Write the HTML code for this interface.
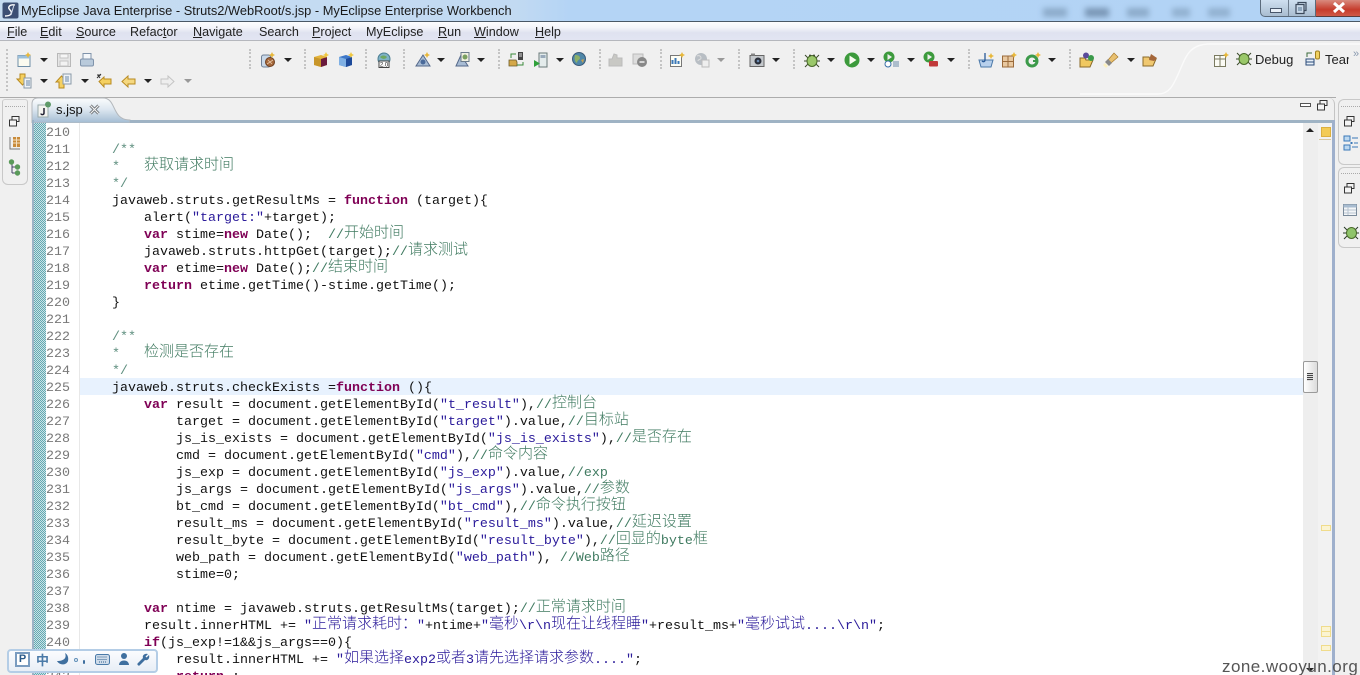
<!DOCTYPE html>
<html><head><meta charset="utf-8"><title>MyEclipse</title>
<style>
html,body{margin:0;padding:0;width:1360px;height:675px;overflow:hidden;background:#f0f0f0}
body{position:relative;font-family:"Liberation Sans","Noto Sans CJK SC",sans-serif}
.abs,svg.i,.m,.a,.s,.l,.n,.v{position:absolute}
svg.i{width:16px;height:16px;overflow:visible}
.m{top:24px;font-size:12.6px;line-height:16px;color:#222;white-space:pre}
.a{width:0;height:0;border-left:4px solid transparent;border-right:4px solid transparent;border-top:4px solid #222}
.a.g{border-top-color:#999}
.s{width:0;border-left:2px dotted #c4c4c4;height:20px;top:49px}
.n{left:46px;width:26px;height:17px;margin-top:1px;font:13.33px/17px "Liberation Mono",monospace;color:#787878}
.l{left:80px;height:17px;margin-top:1px;font:13.33px/17px "Liberation Mono","Noto Sans CJK SC",monospace;color:#111;white-space:pre}
.l b{color:#7f0055;font-weight:bold}
.l i{font-style:normal;color:#2a1a9a}
.l u{text-decoration:none;color:#3f7a60}
.l em{font:300 15px/0 "Noto Sans CJK SC",sans-serif;position:relative;top:-1px;font-style:normal}
.j{color:#5f8f7f}
.v{width:22px;border:1px solid #c8c8c8;border-right:0;border-radius:6px 0 0 6px;background:#f0f0f0}
.mk{position:absolute;left:1321px;width:8px;height:4px;border:1px solid #f0dc8c;background:#fbf4d2}
</style></head><body>

<!-- title bar -->
<div class="abs" style="left:0;top:0;width:1360px;height:21px;background:linear-gradient(90deg,#c6dcf1 0,#c2daf2 515px,#b4d4f5 570px,#b2d3f5 100%)"></div>
<div class="abs" style="left:0;top:21px;width:1360px;height:1px;background:#4a5866"></div>
<svg class="i" style="left:2px;top:2px;width:17px;height:17px" viewBox="0 0 17 17"><rect width="16" height="16" x=".5" y=".5" rx="2" fill="#3c4f74"/><path d="M13 3C8 2 5 5 8 8s1 6-5 6" stroke="#fff" stroke-width="1.4" fill="none"/><path d="M12 3L9 13" stroke="#cfd8e8" stroke-width="1"/></svg>
<div class="abs" style="left:21px;top:3px;font-size:12.85px;line-height:16px;color:#1a1a1a;white-space:pre">MyEclipse Java Enterprise - Struts2/WebRoot/s.jsp - MyEclipse Enterprise Workbench</div>
<div class="abs" style="left:1043px;top:8px;width:24px;height:9px;background:#7c9ab8;filter:blur(3px);opacity:.7"></div>
<div class="abs" style="left:1085px;top:8px;width:24px;height:9px;background:#6c88a6;filter:blur(3px);opacity:.8"></div>
<div class="abs" style="left:1127px;top:8px;width:22px;height:9px;background:#7c9ab8;filter:blur(3px);opacity:.7"></div>
<div class="abs" style="left:1172px;top:8px;width:18px;height:9px;background:#7c9ab8;filter:blur(3px);opacity:.6"></div>
<div class="abs" style="left:1208px;top:8px;width:22px;height:9px;background:#7c9ab8;filter:blur(3px);opacity:.6"></div>
<div class="abs" style="left:1260px;top:0;width:56px;height:17px;background:linear-gradient(#cfe0f0,#a9bdd0);border:1px solid #5b6b7b;border-top:0;border-radius:0 0 0 5px;box-sizing:border-box"></div>
<div class="abs" style="left:1288px;top:0;width:1px;height:16px;background:#6f7f8f"></div>
<div class="abs" style="left:1316px;top:0;width:44px;height:17px;background:linear-gradient(#d98a7e,#c63c2c 60%,#d05a48);border-bottom:1px solid #5b3b3b;box-sizing:border-box"></div>
<div class="abs" style="left:1270px;top:8px;width:10px;height:3px;border:1px solid #47566a;background:#e8f0f8"></div>
<svg class="i" style="left:1294px;top:1px;width:14px;height:14px" viewBox="0 0 14 14"><rect x="4" y="1.5" width="8" height="8" fill="none" stroke="#3c4a5c" stroke-width="1.2"/><rect x="2" y="3.5" width="8" height="9" fill="#c8d8e8" stroke="#3c4a5c" stroke-width="1.2"/><rect x="4" y="6" width="4" height="4" fill="#8ea6bc"/></svg>
<svg class="i" style="left:1332px;top:2px;width:14px;height:12px" viewBox="0 0 14 12"><path d="M2 1l10 9M12 1L2 10" stroke="#fff" stroke-width="3"/></svg>

<!-- menu -->
<div class="abs" style="left:0;top:22px;width:1360px;height:18px;background:linear-gradient(#fdfdfe 0,#f4f5fa 30%,#dfe2f0 60%,#e2e5f2 100%)"></div>
<div class="abs" style="left:0;top:40px;width:1360px;height:1px;background:#b5b7bd"></div>
<div class="m" style="left:7px"><span style="text-decoration:underline">F</span>ile</div>
<div class="m" style="left:40px"><span style="text-decoration:underline">E</span>dit</div>
<div class="m" style="left:76px"><span style="text-decoration:underline">S</span>ource</div>
<div class="m" style="left:130px">Refac<span style="text-decoration:underline">t</span>or</div>
<div class="m" style="left:193px"><span style="text-decoration:underline">N</span>avigate</div>
<div class="m" style="left:259px">Search</div>
<div class="m" style="left:312px"><span style="text-decoration:underline">P</span>roject</div>
<div class="m" style="left:366px">MyEclipse</div>
<div class="m" style="left:438px"><span style="text-decoration:underline">R</span>un</div>
<div class="m" style="left:474px"><span style="text-decoration:underline">W</span>indow</div>
<div class="m" style="left:535px"><span style="text-decoration:underline">H</span>elp</div>

<!-- toolbar separators -->
<div class="s" style="left:6px;height:42px"></div>
<div class="s" style="left:249px"></div><div class="s" style="left:304px"></div><div class="s" style="left:365px"></div><div class="s" style="left:403px"></div><div class="s" style="left:498px"></div><div class="s" style="left:599px"></div><div class="s" style="left:660px"></div><div class="s" style="left:738px"></div><div class="s" style="left:793px"></div><div class="s" style="left:968px"></div><div class="s" style="left:1069px"></div>

<!-- perspective curve -->
<svg class="abs" style="left:1040px;top:40px;width:320px;height:58px" viewBox="0 0 320 58"><path d="M320 4H170C150 4 146 16 140 30S130 54 118 54H40" fill="none" stroke="#fafafa" stroke-width="1.4"/></svg>

<!-- toolbar row 1 icons -->
<svg class="i" style="left:16px;top:52px" viewBox="0 0 16 16"><rect x="2" y="3.5" width="12" height="11" fill="#fbfbf0" stroke="#6f8fa8"/><rect x="2" y="3.5" width="12" height="3" fill="#9cc0dc"/><path d="M12 0l1 2 2 1-2 1-1 2-1-2-2-1 2-1z" fill="#e8b83a"/></svg>
<div class="a" style="left:40px;top:58px"></div>
<svg class="i" style="left:56px;top:52px" viewBox="0 0 16 16"><rect x="1.5" y="1.5" width="13" height="13" fill="#e6e6e6" stroke="#b8b8b8"/><rect x="4" y="2" width="8" height="4" fill="#f6f6f6" stroke="#c4c4c4"/><rect x="4" y="9" width="8" height="5" fill="#f2f2f2" stroke="#c4c4c4"/></svg>
<svg class="i" style="left:79px;top:52px" viewBox="0 0 16 16"><rect x="4" y="1.5" width="8" height="6" fill="#f4f7fa" stroke="#7f93ab"/><rect x="1.5" y="7" width="13" height="7" rx="1.5" fill="#b9cadb" stroke="#7f93ab"/></svg>
<svg class="i" style="left:260px;top:52px" viewBox="0 0 16 16"><rect x="1.5" y="3" width="9" height="12" rx="2" fill="#c9d8e8" stroke="#6f8096"/><circle cx="10" cy="10" r="4.5" fill="#a5673a" stroke="#6d3f20"/><path d="M7 12l6-4M8 8l4 4" stroke="#e8c8a8" stroke-width=".8"/><path d="M12 0l1 2 2 1-2 1-1 2-1-2-2-1 2-1z" fill="#e8b83a"/></svg>
<div class="a" style="left:284px;top:58px"></div>
<svg class="i" style="left:313px;top:52px" viewBox="0 0 16 16"><path d="M1 5l7-2 6 2v8l-6 2-7-2z" fill="#e5b43a"/><path d="M8 7l6-2v8l-6 2z" fill="#6a1a3c"/><path d="M1 5l7 2v8l-7-2z" fill="#c8962a"/><path d="M13 0l1 2 2 1-2 1-1 2-1-2-2-1 2-1z" fill="#f0c840"/></svg>
<svg class="i" style="left:338px;top:52px" viewBox="0 0 16 16"><path d="M1 5l7-2 6 2v8l-6 2-7-2z" fill="#3f78c8"/><path d="M8 7l6-2v8l-6 2z" fill="#1d4a9a"/><path d="M1 5l7 2v8l-7-2z" fill="#7fb0e4"/><path d="M13 0l1 2 2 1-2 1-1 2-1-2-2-1 2-1z" fill="#f0c840"/></svg>
<svg class="i" style="left:376px;top:52px" viewBox="0 0 16 16"><circle cx="8" cy="7" r="6" fill="#7fb2c6" stroke="#4a7e92"/><path d="M4 5c2-2 5-2 7 0-2 3-5 2-7 0z" fill="#6ea860"/><rect x="3" y="9" width="10" height="6.5" fill="#fff" stroke="#444"/><text x="8" y="14.4" font-size="6" text-anchor="middle" fill="#222" font-family="Liberation Sans">2.0</text></svg>
<svg class="i" style="left:415px;top:52px" viewBox="0 0 16 16"><path d="M8 3L1 14h14z" fill="#a8bcd4" stroke="#54688a"/><circle cx="8" cy="10" r="2.5" fill="#4a6a9a"/><path d="M12 0l1 2 2 1-2 1-1 2-1-2-2-1 2-1z" fill="#e8b83a"/></svg>
<div class="a" style="left:437px;top:58px"></div>
<svg class="i" style="left:455px;top:51px" viewBox="0 0 16 16"><path d="M6 4L1 15h12z" fill="#a8bcd4" stroke="#54688a"/><rect x="6" y="1.5" width="8" height="9" fill="#f0f0e0" stroke="#6a7a8a"/><circle cx="10" cy="6" r="2.5" fill="#7aa060"/></svg>
<div class="a" style="left:556px;top:58px"></div>
<div class="a" style="left:477px;top:58px"></div>
<svg class="i" style="left:508px;top:51px" viewBox="0 0 16 16"><path d="M1 9h7l1 2v4H1z" fill="#d4a848" stroke="#6a5a2a" stroke-width=".8"/><rect x="10" y="1" width="5" height="8" fill="#444"/><path d="M11 3h3M11 5h3" stroke="#ddd"/><path d="M3 7V3h5M15 11v3H9" stroke="#3a8a3a" stroke-width="1" fill="none"/></svg>
<svg class="i" style="left:533px;top:52px" viewBox="0 0 16 16"><rect x="6" y="1" width="8" height="14" fill="#e4ecec" stroke="#6a7a7a"/><rect x="7.5" y="3" width="5" height="3" fill="#9ab"/><path d="M1 8l6 3.5-6 3.5z" fill="#2fa03a"/></svg>
<svg class="i" style="left:571px;top:51px" viewBox="0 0 16 16"><circle cx="8" cy="8" r="6.5" fill="#4f87a8" stroke="#3a5a78"/><path d="M4 4c3 0 5 1 5 3s-3 2-3 5c-2-1-3-4-2-8z" fill="#8cb068"/><path d="M10 9l3-1-1 4z" fill="#c8a050"/></svg>
<svg class="i" style="left:608px;top:52px" viewBox="0 0 16 16"><path d="M1 7h3l2-5 3 1v3h5v8H1z" fill="#c8c8c4" stroke="#bbb"/></svg>
<svg class="i" style="left:632px;top:52px" viewBox="0 0 16 16"><path d="M1 2h10v10H1z" fill="#ddd" stroke="#bbb"/><circle cx="10" cy="10" r="5" fill="#888"/><path d="M7.5 10h5" stroke="#eee" stroke-width="1.5"/></svg>
<svg class="i" style="left:669px;top:52px" viewBox="0 0 16 16"><rect x="1.5" y="3.5" width="11" height="11" fill="#fdfdf4" stroke="#777"/><path d="M3.5 12V8M6.5 12V6M9.5 12V9" stroke-width="2" stroke="#3a78b8"/><path d="M13 0l1 2 2 1-2 1-1 2-1-2-2-1 2-1z" fill="#e8b83a"/></svg>
<svg class="i" style="left:694px;top:52px" viewBox="0 0 16 16"><circle cx="7" cy="7" r="6" fill="#b8bec4"/><rect x="8" y="8" width="7" height="7" fill="#eee" stroke="#bbb"/><path d="M3 4c2-1 4 0 4 2s-3 1-3 3" stroke="#ddd" fill="none"/></svg>
<div class="a g" style="left:717px;top:58px"></div>
<svg class="i" style="left:749px;top:52px" viewBox="0 0 16 16"><rect x="1" y="3.5" width="14" height="11" fill="#c4c8cc" stroke="#666"/><circle cx="9" cy="9" r="3.5" fill="#2a2f3a"/><circle cx="9" cy="9" r="1.3" fill="#6a8ab0"/><rect x="2" y="1.5" width="4" height="2" fill="#888"/></svg>
<div class="a" style="left:772px;top:58px"></div>
<svg class="i" style="left:804px;top:52px" viewBox="0 0 16 16"><path d="M1 3l3 3M15 3l-3 3M0 9h3M13 9h3M1 15l3-3M15 15l-3-3" stroke="#3a4a2a"/><ellipse cx="8" cy="9" rx="5" ry="5.5" fill="#9ac86a" stroke="#4a6a2a"/><circle cx="6" cy="3.5" r="1" fill="#3a4a2a"/><circle cx="10" cy="3.5" r="1" fill="#3a4a2a"/></svg>
<div class="a" style="left:827px;top:58px"></div>
<svg class="i" style="left:844px;top:52px" viewBox="0 0 16 16"><circle cx="8" cy="8" r="7.5" fill="#3c9a3c"/><path d="M5.5 3.5l7 4.5-7 4.5z" fill="#f8fcf0"/></svg>
<div class="a" style="left:867px;top:58px"></div>
<svg class="i" style="left:883px;top:51px" viewBox="0 0 16 16"><circle cx="6" cy="6" r="5.5" fill="#3c9a3c"/><path d="M4.5 3l4.5 3-4.5 3z" fill="#eee"/><circle cx="5" cy="13" r="3" fill="#fff" stroke="#3a70a8"/><path d="M10 11h6M10 13h6M10 15h6" stroke="#6a8aa8"/></svg>
<div class="a" style="left:907px;top:58px"></div>
<svg class="i" style="left:923px;top:51px" viewBox="0 0 16 16"><circle cx="6" cy="6" r="5.5" fill="#3c9a3c"/><path d="M4.5 3l4.5 3-4.5 3z" fill="#eee"/><rect x="6" y="10" width="9" height="5.5" rx="1" fill="#c03a3a"/></svg>
<div class="a" style="left:947px;top:58px"></div>
<svg class="i" style="left:978px;top:52px" viewBox="0 0 16 16"><path d="M1 8l2 7h10l2-7z" fill="#b8d0ec" stroke="#4a78a8"/><path d="M7 1v7c0 2-2 2-3 1" stroke="#2a5a98" stroke-width="1.3" fill="none"/><path d="M13 1l1 2 2 1-2 1-1 2-1-2-2-1 2-1z" fill="#e8b83a"/></svg>
<svg class="i" style="left:1001px;top:52px" viewBox="0 0 16 16"><rect x="1.5" y="4" width="11" height="11" fill="#e8c8a0" stroke="#9a6a3a"/><path d="M7 4v11M1.500 9.500h11" stroke="#9a6a3a"/><path d="M13 0l1 2 2 1-2 1-1 2-1-2-2-1 2-1z" fill="#e8b83a"/></svg>
<svg class="i" style="left:1025px;top:52px" viewBox="0 0 16 16"><circle cx="7" cy="9" r="5" fill="none" stroke="#3c9a4a" stroke-width="3"/><path d="M8 9h4" stroke="#3c9a4a" stroke-width="2"/><path d="M13 0l1 2 2 1-2 1-1 2-1-2-2-1 2-1z" fill="#e8b83a"/></svg>
<div class="a" style="left:1048px;top:58px"></div>
<svg class="i" style="left:1079px;top:52px" viewBox="0 0 16 16"><path d="M1 6h5l1 2h7l-3 7H1z" fill="#f0c860" stroke="#8a6a2a"/><circle cx="7" cy="3.500" r="3" fill="#5a4a9a"/><circle cx="12" cy="6" r="3" fill="#3a9a4a"/></svg>
<svg class="i" style="left:1103px;top:52px" viewBox="0 0 16 16"><path d="M5 8l6-7 4 4-7 6z" fill="#e8c070" stroke="#a87a2a" stroke-width=".7"/><path d="M2 10l3-3 4 4-3 3z" fill="#888"/><path d="M0 13l2-2 3 3-2 2z" fill="#fbf0c0"/></svg>
<div class="a" style="left:1127px;top:58px"></div>
<svg class="i" style="left:1142px;top:52px" viewBox="0 0 16 16"><path d="M1 5h6l1 2h6l-3 7H1z" fill="#f0c870" stroke="#8a6a2a"/><path d="M7 8l2-6 6 4-3 3z" fill="#a5673a"/></svg>

<!-- perspective -->
<svg class="i" style="left:1213px;top:52px" viewBox="0 0 16 16"><rect x="1.500" y="3.500" width="11" height="11" fill="#fbfbf4" stroke="#7a7a60"/><path d="M1.500 7h11M7 3.500v11" stroke="#7a7a60"/><path d="M13 0l1 2 2 1-2 1-1 2-1-2-2-1 2-1z" fill="#e8b83a"/></svg>
<svg class="i" style="left:1236px;top:50px" viewBox="0 0 16 16"><path d="M1 3l3 3M15 3l-3 3M0 9h3M13 9h3M1 15l3-3M15 15l-3-3" stroke="#3a4a2a"/><ellipse cx="8" cy="9" rx="5" ry="5.500" fill="#9ac86a" stroke="#4a6a2a"/></svg>
<div class="abs" style="left:1255px;top:51px;font-size:13px;line-height:17px;color:#222">Debug</div>
<svg class="i" style="left:1305px;top:50px" viewBox="0 0 16 16"><rect x="1" y="9" width="8" height="6" fill="#e8f0f8" stroke="#2a4a78"/><path d="M1 12h8" stroke="#2a4a78"/><path d="M2 7V3h5" stroke="#3a6a3a" fill="none"/><rect x="10.500" y="1" width="4" height="8" rx="1.500" fill="#f0d060" stroke="#a08020"/></svg>
<div class="abs" style="left:1325px;top:51px;width:24px;overflow:hidden;font-size:13px;line-height:17px;color:#222">Team</div>
<div class="abs" style="left:1353px;top:48px;font-size:11px;line-height:12px;color:#8a9ab0">»</div>

<!-- toolbar row 2 -->
<svg class="i" style="left:16px;top:73px" viewBox="0 0 16 16"><path d="M4 1h5v5h3l-5.500 6L1 6h3z" fill="#f5d060" stroke="#b88a20"/><rect x="8" y="5" width="7" height="10" fill="#eef2f6" stroke="#8a9aa8"/><path d="M10 8h4M10 10h4M10 12h4" stroke="#6a88a8"/></svg>
<div class="a" style="left:40px;top:79px"></div>
<svg class="i" style="left:56px;top:73px" viewBox="0 0 16 16"><path d="M3 15h5V9h3L5.500 3 0 9h3z" fill="#f5d060" stroke="#b88a20"/><rect x="7" y="1" width="8" height="10" fill="#eef2f6" stroke="#8a9aa8"/><path d="M9 4h4M9 6h4M9 8h4" stroke="#6a88a8"/></svg>
<div class="a" style="left:81px;top:79px"></div>
<svg class="i" style="left:96px;top:73px" viewBox="0 0 16 16"><path d="M15 6v5H8v3L3 8.500 8 4v2z" fill="#f5d060" stroke="#b88a20"/><path d="M2 2l2 3M5 1L1 5M1 2h4" stroke="#333"/></svg>
<svg class="i" style="left:120px;top:73px" viewBox="0 0 16 16"><path d="M15 6v5H8v3L2 8.500 8 3v3z" fill="#f5d880" stroke="#b88a20"/></svg>
<div class="a" style="left:144px;top:79px"></div>
<svg class="i" style="left:160px;top:73px" viewBox="0 0 16 16"><path d="M1 6v5h7v3l6-5.500L8 3v3z" fill="#eee" stroke="#c4c4c4"/></svg>
<div class="a g" style="left:184px;top:79px"></div>

<!-- frame line -->
<div class="abs" style="left:0;top:97px;width:1336px;height:1px;background:#acacac"></div>

<!-- left trim -->
<div class="abs" style="left:2px;top:99px;width:26px;height:86px;border:1px solid #c8c8c8;border-top-color:#d0d0d0;border-radius:3px 3px 6px 6px;background:#f0f0f0;box-sizing:border-box"></div>
<div class="abs" style="left:5px;top:106px;width:20px;height:0;border-top:1px dotted #aaa"></div>
<svg class="i" style="left:8px;top:115px;width:13px;height:13px" viewBox="0 0 13 13"><rect x="4" y="1.500" width="7" height="5" fill="#f4f4f4" stroke="#333"/><rect x="1.500" y="5" width="7" height="6" fill="#f4f4f4" stroke="#333"/></svg>
<svg class="i" style="left:8px;top:136px;width:14px;height:14px" viewBox="0 0 14 14"><path d="M2 1v12h10" stroke="#777" fill="none"/><rect x="5" y="1" width="7" height="10" fill="#c88a3a"/><path d="M5 4h7M5 7h7M8.500 1v10" stroke="#f4e0c0"/></svg>
<svg class="i" style="left:8px;top:159px;width:14px;height:16px" viewBox="0 0 14 16"><path d="M4 3v11M4 8h5M4 14h5" stroke="#446" fill="none"/><circle cx="3.500" cy="3" r="2.700" fill="#5a9a5a"/><circle cx="9.500" cy="8" r="2.700" fill="#5a9a5a"/><circle cx="9.500" cy="14" r="2.700" fill="#5a9a5a"/></svg>

<!-- editor frame -->
<div class="abs" style="left:31px;top:98px;width:1304px;height:577px;background:#f0f0f0;border-radius:6px 6px 0 0;border-right:1px solid #c4c4c4;box-sizing:border-box"></div>
<svg class="abs" style="left:31px;top:97px;width:110px;height:26px" viewBox="0 0 110 26"><defs><linearGradient id="t" x1="0" y1="0" x2="0" y2="1"><stop offset="0" stop-color="#fbfcfd"/><stop offset=".45" stop-color="#dde7f0"/><stop offset="1" stop-color="#a2bbd2"/></linearGradient></defs><path d="M1 26V7C1 3 3 1 7 1H72C86 1 80 23 99 23V26z" fill="url(#t)" stroke="#b4b8bc"/></svg>
<svg class="i" style="left:36px;top:101px;width:16px;height:16px" viewBox="0 0 16 16"><rect x="2" y="4" width="10" height="12" fill="#f4f4f0" stroke="#9aa"/><path d="M8 7v5c0 2-3 2-3 .5" stroke="#223" stroke-width="1.500" fill="none"/><circle cx="12" cy="3.500" r="3" fill="#5f9a6a"/></svg>
<div class="abs" style="left:56px;top:102px;font-size:13px;line-height:16px;color:#111">s.jsp</div>
<svg class="i" style="left:89px;top:104px;width:11px;height:11px" viewBox="0 0 11 11"><path d="M1.500 1.500l8 8M9.500 1.500l-8 8" stroke="#6a6f74" stroke-width="3"/><path d="M1.500 1.500l8 8M9.500 1.500l-8 8" stroke="#f4f4f4" stroke-width="1.200"/></svg>
<div class="abs" style="left:1300px;top:103px;width:9px;height:2px;border:1px solid #555;background:#fff"></div>
<svg class="i" style="left:1316px;top:99px;width:13px;height:13px" viewBox="0 0 13 13"><rect x="4" y="1.500" width="7" height="5" fill="#f4f4f4" stroke="#333"/><rect x="1.500" y="5" width="7" height="6" fill="#f4f4f4" stroke="#333"/></svg>

<div class="abs" style="left:130px;top:120px;width:1204px;height:3px;background:#9fb3c4"></div>
<div class="abs" style="left:32px;top:123px;width:1301px;height:552px;background:#fff"></div>
<div class="abs" style="left:32px;top:120px;width:2px;height:555px;background:#9db3c6"></div>
<div class="abs" style="left:34px;top:123px;width:12px;height:552px;background-color:#8cc4cc;background-image:repeating-conic-gradient(#64a8b2 0 25%,#c8e4e6 0 50%);background-size:2px 2px"></div>
<div class="abs" style="left:79px;top:123px;width:1px;height:552px;background:#e8e8e8"></div>
<div class="abs" style="left:80px;top:378px;width:1223px;height:17px;background:#e8f2fe"></div>

<!-- scrollbar / ruler -->
<div class="abs" style="left:1303px;top:123px;width:15px;height:552px;background:#eeeeee"></div>
<div class="abs" style="left:1318px;top:123px;width:14px;height:552px;background:#f2f2f2"></div>
<div class="abs" style="left:1332px;top:120px;width:3px;height:555px;background:#9fb0cc"></div>
<div class="a" style="left:1306px;top:128px;border-top:0;border-bottom:4px solid #222"></div>
<div class="a" style="left:1306px;top:668px"></div>
<div class="abs" style="left:1321px;top:127px;width:8px;height:8px;background:#f3cb55;border:1px solid #dcb040"></div>
<div class="abs" style="left:1319px;top:139px;width:12px;height:1px;background:#d8c8a0"></div>
<div class="abs" style="left:1303px;top:361px;width:15px;height:32px;box-sizing:border-box;border:1px solid #9a9a9a;border-radius:2px;background:linear-gradient(90deg,#fff,#dcdcdc)"></div>
<div class="abs" style="left:1307px;top:373px;width:6px;height:8px;background:repeating-linear-gradient(#444 0 1px,#ddd 1px 2px)"></div>
<div class="mk" style="top:525px"></div>
<div class="mk" style="top:626px"></div>
<div class="mk" style="top:631px"></div>
<div class="mk" style="top:645px"></div>

<!-- right trim -->
<div class="v" style="left:1338px;top:99px;height:64px"></div>
<div class="v" style="left:1338px;top:167px;height:79px"></div>
<div class="abs" style="left:1341px;top:106px;width:19px;height:0;border-top:1px dotted #aaa"></div>
<div class="abs" style="left:1341px;top:173px;width:19px;height:0;border-top:1px dotted #aaa"></div>
<svg class="i" style="left:1343px;top:115px;width:13px;height:13px" viewBox="0 0 13 13"><rect x="4" y="1.500" width="7" height="5" fill="#f4f4f4" stroke="#333"/><rect x="1.500" y="5" width="7" height="6" fill="#f4f4f4" stroke="#333"/></svg>
<svg class="i" style="left:1343px;top:135px;width:16px;height:16px" viewBox="0 0 16 16"><rect x="1" y="1" width="6" height="5" fill="#bcd8f0" stroke="#3a78b8"/><rect x="1" y="10" width="6" height="5" fill="#bcd8f0" stroke="#3a78b8"/><path d="M9 3h6M11 8h4M9 12h6" stroke="#3a78b8"/><rect x="7.500" y="7" width="2" height="2" fill="#3a78b8"/></svg>
<svg class="i" style="left:1343px;top:182px;width:13px;height:13px" viewBox="0 0 13 13"><rect x="4" y="1.500" width="7" height="5" fill="#f4f4f4" stroke="#333"/><rect x="1.500" y="5" width="7" height="6" fill="#f4f4f4" stroke="#333"/></svg>
<svg class="i" style="left:1343px;top:204px;width:14px;height:13px" viewBox="0 0 14 13"><rect x=".5" y=".5" width="13" height="11" fill="#f4f6f8" stroke="#7a8a9a"/><rect x=".5" y=".5" width="13" height="3" fill="#a8bcd0"/><path d="M1 6h12M1 9h12M5 3v8" stroke="#b8c4d0"/></svg>
<svg class="i" style="left:1343px;top:224px" viewBox="0 0 16 16"><path d="M1 3l3 3M15 3l-3 3M0 9h3M13 9h3M1 15l3-3M15 15l-3-3" stroke="#2a3a2a"/><ellipse cx="8.500" cy="9" rx="5" ry="5.500" fill="#8fc46a" stroke="#4a6a2a"/></svg>

<!-- line numbers -->
<div class="n" style="top:124px">210</div><div class="n" style="top:141px">211</div><div class="n" style="top:158px">212</div><div class="n" style="top:175px">213</div><div class="n" style="top:192px">214</div><div class="n" style="top:209px">215</div><div class="n" style="top:226px">216</div><div class="n" style="top:243px">217</div><div class="n" style="top:260px">218</div><div class="n" style="top:277px">219</div><div class="n" style="top:294px">220</div><div class="n" style="top:311px">221</div><div class="n" style="top:328px">222</div><div class="n" style="top:345px">223</div><div class="n" style="top:362px">224</div><div class="n" style="top:379px">225</div><div class="n" style="top:396px">226</div><div class="n" style="top:413px">227</div><div class="n" style="top:430px">228</div><div class="n" style="top:447px">229</div><div class="n" style="top:464px">230</div><div class="n" style="top:481px">231</div><div class="n" style="top:498px">232</div><div class="n" style="top:515px">233</div><div class="n" style="top:532px">234</div><div class="n" style="top:549px">235</div><div class="n" style="top:566px">236</div><div class="n" style="top:583px">237</div><div class="n" style="top:600px">238</div><div class="n" style="top:617px">239</div><div class="n" style="top:634px">240</div><div class="n" style="top:651px">241</div><div class="n" style="top:668px">242</div>

<!-- code -->
<div class="l" style="top:141px"><span class="j">    /**</span></div>
<div class="l" style="top:158px"><span class="j">    *   </span><u><em>获取请求时间</em></u></div>
<div class="l" style="top:175px"><span class="j">    */</span></div>
<div class="l" style="top:192px">    javaweb.struts.getResultMs = <b>function</b> (target){</div>
<div class="l" style="top:209px">        alert(<i>"target:"</i>+target);</div>
<div class="l" style="top:226px">        <b>var</b> stime=<b>new</b> Date();  <u>//<em>开始时间</em></u></div>
<div class="l" style="top:243px">        javaweb.struts.httpGet(target);<u>//<em>请求测试</em></u></div>
<div class="l" style="top:260px">        <b>var</b> etime=<b>new</b> Date();<u>//<em>结束时间</em></u></div>
<div class="l" style="top:277px">        <b>return</b> etime.getTime()-stime.getTime();</div>
<div class="l" style="top:294px">    }</div>
<div class="l" style="top:328px"><span class="j">    /**</span></div>
<div class="l" style="top:345px"><span class="j">    *   </span><u><em>检测是否存在</em></u></div>
<div class="l" style="top:362px"><span class="j">    */</span></div>
<div class="l" style="top:379px">    javaweb.struts.checkExists =<b>function</b> (){</div>
<div class="l" style="top:396px">        <b>var</b> result = document.getElementById(<i>"t_result"</i>),<u>//<em>控制台</em></u></div>
<div class="l" style="top:413px">            target = document.getElementById(<i>"target"</i>).value,<u>//<em>目标站</em></u></div>
<div class="l" style="top:430px">            js_is_exists = document.getElementById(<i>"js_is_exists"</i>),<u>//<em>是否存在</em></u></div>
<div class="l" style="top:447px">            cmd = document.getElementById(<i>"cmd"</i>),<u>//<em>命令内容</em></u></div>
<div class="l" style="top:464px">            js_exp = document.getElementById(<i>"js_exp"</i>).value,<u>//exp</u></div>
<div class="l" style="top:481px">            js_args = document.getElementById(<i>"js_args"</i>).value,<u>//<em>参数</em></u></div>
<div class="l" style="top:498px">            bt_cmd = document.getElementById(<i>"bt_cmd"</i>),<u>//<em>命令执行按钮</em></u></div>
<div class="l" style="top:515px">            result_ms = document.getElementById(<i>"result_ms"</i>).value,<u>//<em>延迟设置</em></u></div>
<div class="l" style="top:532px">            result_byte = document.getElementById(<i>"result_byte"</i>),<u>//<em>回显的</em>byte<em>框</em></u></div>
<div class="l" style="top:549px">            web_path = document.getElementById(<i>"web_path"</i>), <u>//Web<em>路径</em></u></div>
<div class="l" style="top:566px">            stime=0;</div>
<div class="l" style="top:600px">        <b>var</b> ntime = javaweb.struts.getResultMs(target);<u>//<em>正常请求时间</em></u></div>
<div class="l" style="top:617px">        result.innerHTML += <i>"<em>正常请求耗时：</em>"</i>+ntime+<i>"<em>毫秒</em>\r\n<em>现在让线程睡</em>"</i>+result_ms+<i>"<em>毫秒试试</em>....\r\n"</i>;</div>
<div class="l" style="top:634px">        <b>if</b>(js_exp!=1&amp;&amp;js_args==0){</div>
<div class="l" style="top:651px">            result.innerHTML += <i>"<em>如果选择</em>exp2<em>或者</em>3<em>请先选择请求参数</em>...."</i>;</div>
<div class="l" style="top:668px">            <b>return</b> ;</div>

<!-- IME bar -->
<div class="abs" style="left:7px;top:649px;width:151px;height:24px;box-sizing:border-box;border:2px solid #b4cde6;border-radius:4px;background:linear-gradient(#fbfcfe,#e8eef6)"></div>
<div class="abs" style="left:15px;top:652px;width:15px;height:15px;box-sizing:border-box;border:2px solid #7a9cc0;background:#fff;font:bold 11px/11px 'Liberation Sans';text-align:center;color:#2a5a8a">P</div>
<div class="abs" style="left:36px;top:651px;font:bold 13px/17px 'Noto Sans CJK SC',sans-serif;color:#4a7aa8">中</div>
<svg class="i" style="left:56px;top:652px;width:14px;height:14px" viewBox="0 0 14 14"><path d="M9 1c2 5-1 8-8 8 2 4 9 5 11 0 1-4-1-7-3-8z" fill="#3f6f9f"/></svg>
<div class="abs" style="left:74px;top:658px;width:4px;height:4px;border:1px solid #5f8fb8;border-radius:50%;box-sizing:border-box"></div>
<div class="abs" style="left:83px;top:660px;width:2px;height:4px;background:#3f6f9f;border-radius:1px"></div>
<svg class="i" style="left:95px;top:654px;width:16px;height:11px" viewBox="0 0 16 11"><rect x=".5" y=".5" width="14" height="10" rx="2" fill="#cfdcea" stroke="#4a7aa8"/><path d="M2.500 3h10M2.500 5.500h10M4 8h7" stroke="#2f5f8f" stroke-dasharray="1 1"/></svg>
<svg class="i" style="left:117px;top:652px;width:14px;height:14px" viewBox="0 0 14 14"><circle cx="7" cy="4" r="3" fill="#3f6f9f"/><path d="M2 13c0-6 10-6 10 0z" fill="#3f6f9f"/></svg>
<svg class="i" style="left:136px;top:652px;width:14px;height:14px" viewBox="0 0 14 14"><path d="M1.500 11.500L7 6c-1-3 2-5 5-4l-2.500 2.500 1 1L13 3c1 3-1 6-4 5l-5.500 5.500c-1 .5-2.500-.5-2-2z" fill="#3f6f9f"/></svg>

<!-- watermark -->
<div class="abs" style="left:1222px;top:656px;font-size:17px;line-height:21px;letter-spacing:.45px;color:#555;white-space:nowrap">zone.wooyun.org</div>
</body></html>
